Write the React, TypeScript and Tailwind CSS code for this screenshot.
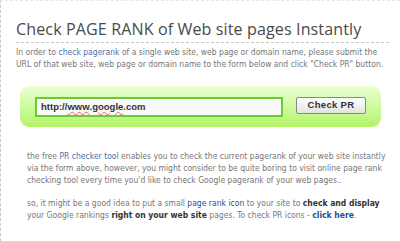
import React from "react";

export default function App() {
  return (
    <div className="w-[400px] h-[241px] overflow-hidden bg-white border-t border-t-[#e6e6e6] border-l border-dashed border-l-[#c8c8c8] [font-family:'DejaVu_Sans_Condensed','DejaVu_Sans',sans-serif]">
      <div className="pl-[15px] pr-[11px]">
        <h1 className="pt-[17px] text-[16.1px] leading-[22px] text-[#4a4a4a] [font-family:'Open_Sans',sans-serif] tracking-[0.1px]">
          Check PAGE RANK of Web site pages Instantly
        </h1>
        <div className="mt-[2px] border-t border-dashed border-t-[#c8c8c8]" />
        <p className="mt-[3px] text-[8.5px] leading-[12px] text-[#777]">
          In order to <span className="text-[#4f6fa8]">check pagerank</span> of a single web site, web page or domain name, please submit the URL of that web site, web page or domain name to the form below and click "Check PR" button.
        </p>
      </div>
      <div className="ml-[19px] mt-[16px] w-[361px] h-[41px] rounded-[9px] bg-gradient-to-b from-[#eaffd2] to-[#b2f465] flex items-start pt-[11px] pl-[15px]">
        <div className="w-[248px] h-[20px] border-2 border-[#6acc33] bg-[#f9f9f9] flex items-center pl-[4px] text-[9.5px] font-bold text-[#333] [font-family:'Liberation_Sans',Arial,sans-serif]">
          http://<span className="underline decoration-wavy decoration-[#e86060] decoration-1 underline-offset-1">www</span>.<span className="underline decoration-wavy decoration-[#e86060] decoration-1 underline-offset-1">google</span>.com
        </div>
        <button className="ml-[13px] w-[70px] h-[17px] rounded-[2px] border border-[#8a8a8a] bg-gradient-to-b from-[#ffffff] to-[#e2e2de] text-[9.5px] font-bold text-[#333] tracking-[0.3px] flex items-center justify-center [font-family:'Liberation_Sans',Arial,sans-serif]">
          Check PR
        </button>
      </div>
      <div className="pl-[26px] pr-[12px] mt-[23px] text-[8.5px] leading-[12px] text-[#777]">
        <p>
          the free <span className="text-[#4f6fa8]">PR checker tool</span> enables you to check the current pagerank of your web site instantly via the form above, however, you might consider to be quite boring to visit online page rank checking tool every time you'd like to check Google pagerank of your web pages..
        </p>
        <p className="mt-[11px]">
          so, it might be a good idea to put a small <span className="text-[#1f4f9a]">page rank icon</span> to your site to <b className="text-[#333]">check and display</b> your Google rankings <b className="text-[#333]">right on your web site</b> pages. To check PR icons - <b className="text-[#1f4f9a]">click here</b>.
        </p>
      </div>
    </div>
  );
}
